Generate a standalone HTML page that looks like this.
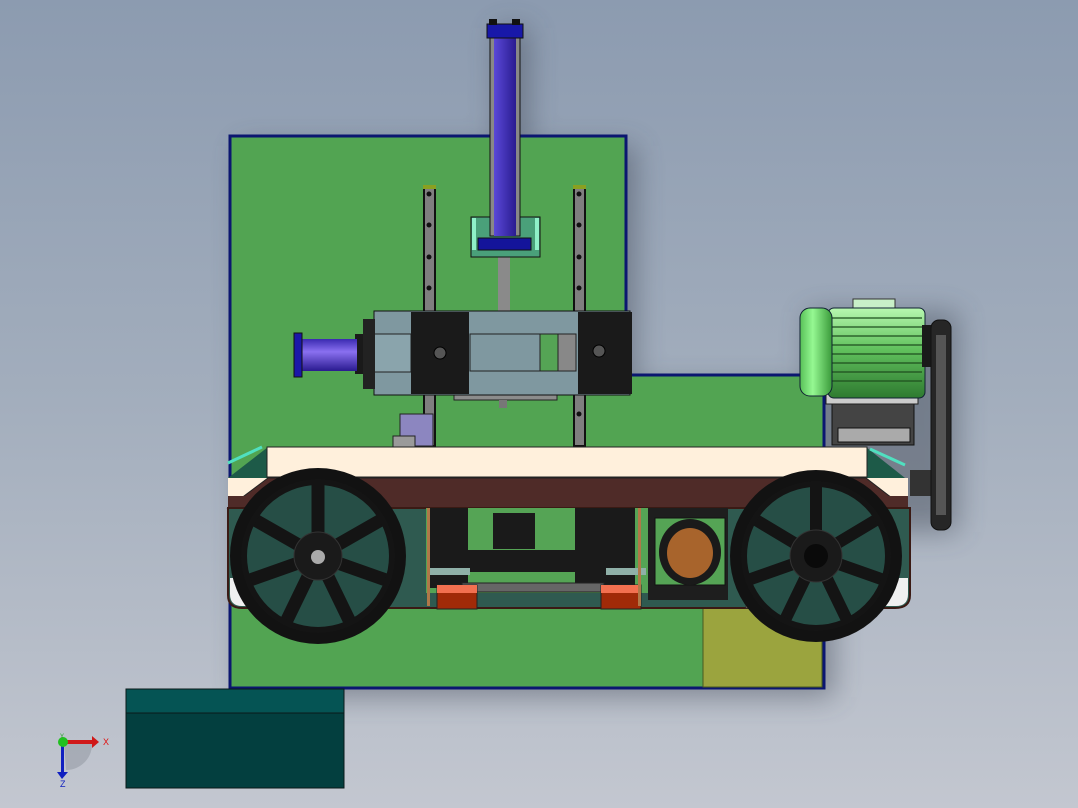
<!DOCTYPE html>
<html><head><meta charset="utf-8"><style>
html,body{margin:0;padding:0;width:1078px;height:808px;overflow:hidden}
svg{display:block}
</style></head><body>
<svg width="1078" height="808" viewBox="0 0 1078 808" xmlns="http://www.w3.org/2000/svg" font-family="Liberation Sans, sans-serif">
<defs>
<linearGradient id="bg" x1="0" y1="0" x2="0" y2="1">
<stop offset="0" stop-color="#8c9bb0"/><stop offset="0.5" stop-color="#a3aebd"/><stop offset="1" stop-color="#c3c7d0"/>
</linearGradient>
<linearGradient id="cylV" x1="0" x2="1"><stop offset="0" stop-color="#5a48d8"/><stop offset="1" stop-color="#2a1c90"/></linearGradient>
<linearGradient id="cylH" x1="0" y1="0" x2="0" y2="1"><stop offset="0" stop-color="#3a2ab0"/><stop offset="0.4" stop-color="#8a70f0"/><stop offset="1" stop-color="#2a1a90"/></linearGradient>
<linearGradient id="motor" x1="0" y1="0" x2="0" y2="1"><stop offset="0" stop-color="#b8f8b0"/><stop offset="0.45" stop-color="#62c25e"/><stop offset="1" stop-color="#2e7a30"/></linearGradient>
<linearGradient id="motorCap" x1="0" x2="1"><stop offset="0" stop-color="#58c058"/><stop offset="0.4" stop-color="#95f892"/><stop offset="1" stop-color="#3a9a3a"/></linearGradient>
<filter id="sh" x="-20%" y="-20%" width="140%" height="140%"><feGaussianBlur stdDeviation="14"/></filter>
</defs>
<rect width="1078" height="808" fill="url(#bg)"/>
<g filter="url(#sh)" opacity="0.45" fill="#3a4250">
<rect x="240" y="146" width="396" height="550"/><rect x="240" y="385" width="594" height="312"/>
<rect x="497" y="28" width="32" height="220"/><rect x="808" y="312" width="150" height="220"/>
</g>
<path d="M230 136 H626 V375 H824 V688 H230 Z" fill="#52a452" stroke="#0b1670" stroke-width="3"/>
<rect x="703" y="602" width="119" height="85" fill="#9ba43e" stroke="#4a5a20" stroke-width="1"/>
<rect x="126" y="689" width="218" height="99" fill="#033f3f" stroke="#0a1a1a"/>
<rect x="126" y="689" width="218" height="24" fill="#055454" stroke="#0a1a1a"/>
<g stroke="#111" stroke-width="2">
<rect x="424" y="188" width="11" height="258" fill="#7f7f7f"/>
<rect x="574" y="188" width="11" height="258" fill="#7f7f7f"/>
</g>
<rect x="423" y="185" width="13" height="4" fill="#8aa020"/><rect x="573" y="185" width="13" height="4" fill="#8aa020"/>
<g fill="#111"><circle cx="429" cy="194" r="2.5"/><circle cx="429" cy="225" r="2.5"/><circle cx="429" cy="257" r="2.5"/><circle cx="429" cy="288" r="2.5"/><circle cx="429" cy="420" r="2.5"/>
<circle cx="579" cy="194" r="2.5"/><circle cx="579" cy="225" r="2.5"/><circle cx="579" cy="257" r="2.5"/><circle cx="579" cy="288" r="2.5"/><circle cx="579" cy="414" r="2.5"/></g>
<rect x="498" y="246" width="12" height="66" fill="#8a8a8a"/>
<rect x="471" y="217" width="69" height="40" fill="#4aa07a" stroke="#111"/>
<rect x="472" y="218" width="4" height="32" fill="#8ff0c8"/><rect x="535" y="218" width="4" height="32" fill="#8ff0c8"/>
<rect x="490" y="36" width="30" height="200" fill="#888" stroke="#111"/>
<rect x="494" y="36" width="22" height="200" fill="url(#cylV)"/>
<rect x="478" y="238" width="53" height="12" fill="#14149a" stroke="#111"/>
<rect x="487" y="24" width="36" height="14" fill="#1818a8" stroke="#111"/>
<rect x="489" y="19" width="8" height="6" fill="#111"/><rect x="512" y="19" width="8" height="6" fill="#111"/>
<rect x="454" y="390" width="103" height="10" fill="#8c8c8c" stroke="#222"/>
<rect x="499" y="400" width="8" height="8" fill="#777"/>
<rect x="400" y="414" width="33" height="32" fill="#8c86c0" stroke="#222"/>
<rect x="393" y="436" width="22" height="12" fill="#9a9a9a" stroke="#222"/>
<rect x="374" y="311" width="256" height="84" fill="#7f98a0" stroke="#111"/>
<rect x="374" y="334" width="37" height="38" fill="#8aa4ac" stroke="#222"/>
<rect x="470" y="334" width="70" height="37" fill="#7f98a0" stroke="#222"/>
<rect x="540" y="334" width="18" height="37" fill="#55a455" stroke="#222"/>
<rect x="558" y="334" width="18" height="37" fill="#888" stroke="#222"/>
<rect x="411" y="312" width="58" height="82" fill="#1a1a1a"/>
<rect x="578" y="312" width="54" height="82" fill="#1a1a1a"/>
<circle cx="440" cy="353" r="6" fill="#555" stroke="#000"/><circle cx="599" cy="351" r="6" fill="#555" stroke="#000"/>
<rect x="355" y="334" width="20" height="40" fill="#1a1a1a"/><rect x="363" y="319" width="12" height="70" fill="#222"/>
<rect x="302" y="339" width="55" height="32" fill="url(#cylH)"/>
<rect x="294" y="333" width="8" height="44" fill="#1a18a8" stroke="#111"/>
<rect x="832" y="393" width="82" height="52" fill="#444" stroke="#111"/>
<rect x="838" y="428" width="72" height="14" fill="#aaa" stroke="#111"/>
<rect x="826" y="388" width="92" height="16" fill="#ccc" stroke="#222"/>
<rect x="853" y="299" width="42" height="12" fill="#c8f0c8" stroke="#333"/>
<rect x="828" y="308" width="97" height="90" rx="6" fill="url(#motor)" stroke="#123"/>
<g stroke="#1e4e1e" stroke-width="1.2">
<line x1="830" y1="318" x2="922" y2="318"/><line x1="830" y1="327" x2="922" y2="327"/><line x1="830" y1="336" x2="922" y2="336"/><line x1="830" y1="345" x2="922" y2="345"/><line x1="830" y1="354" x2="922" y2="354"/><line x1="830" y1="363" x2="922" y2="363"/><line x1="830" y1="372" x2="922" y2="372"/><line x1="830" y1="381" x2="922" y2="381"/></g>
<rect x="800" y="308" width="32" height="88" rx="10" fill="url(#motorCap)" stroke="#123"/>
<rect x="922" y="325" width="12" height="42" fill="#1a1a1a"/>
<rect x="910" y="470" width="25" height="26" fill="#333"/>
<rect x="931" y="320" width="20" height="210" rx="8" fill="#262626" stroke="#111"/>
<rect x="936" y="335" width="10" height="180" fill="#555"/>
<path d="M228 478 L268 447 V478 Z" fill="#1d5a48"/><path d="M228 463 L262 447" stroke="#50e0c0" stroke-width="3"/>
<path d="M905 478 L866 447 V478 Z" fill="#1d5a48"/><path d="M870 449 L905 465" stroke="#50e0c0" stroke-width="3"/>
<rect x="228" y="478" width="680" height="30" fill="#fff0dc"/>
<rect x="267" y="447" width="600" height="30" fill="#fff0dc" stroke="#222"/>
<path d="M228 508 L268 478 H866 L905 508 Z" fill="#4f2b28" stroke="#222"/>
<rect x="228" y="496" width="680" height="12" fill="#4f2b28"/>
<path d="M228 508 H910 V595 Q910 608 895 608 H242 Q228 608 228 595 Z" fill="#2f5a50" stroke="#3a1a14" stroke-width="2"/>
<path d="M230 578 H250 V606 H242 Q230 606 230 594 Z" fill="#f0f0f0"/>
<path d="M880 578 H908 V594 Q908 606 896 606 H880 Z" fill="#f0f0f0"/>
<rect x="254" y="585" width="132" height="23" fill="#fcbf98" stroke="#333"/>
<rect x="746" y="585" width="134" height="23" fill="#fcbf98" stroke="#333"/>
<rect x="426" y="508" width="222" height="85" fill="#55a455"/>
<rect x="430" y="508" width="38" height="80" fill="#1a1a1a"/>
<rect x="575" y="508" width="60" height="80" fill="#1a1a1a"/>
<rect x="493" y="513" width="42" height="36" fill="#1a1a1a"/>
<rect x="466" y="550" width="112" height="22" fill="#1a1a1a"/>
<rect x="462" y="583" width="142" height="9" fill="#666" stroke="#222"/>
<rect x="430" y="568" width="40" height="7" fill="#8fb0a8"/><rect x="606" y="568" width="40" height="7" fill="#8fb0a8"/>
<rect x="437" y="585" width="40" height="24" fill="#a02a08" stroke="#222"/><rect x="437" y="585" width="40" height="8" fill="#f27050"/>
<rect x="601" y="585" width="40" height="24" fill="#a02a08" stroke="#222"/><rect x="601" y="585" width="40" height="8" fill="#f27050"/>
<rect x="427" y="508" width="3" height="98" fill="#b07848"/><rect x="638" y="508" width="3" height="98" fill="#b07848"/>
<rect x="648" y="508" width="80" height="92" fill="#1e1e1e"/>
<rect x="655" y="518" width="70" height="67" fill="#55a455" stroke="#111"/>
<ellipse cx="690" cy="552" rx="31" ry="33" fill="#1a1a1a"/>
<ellipse cx="690" cy="553" rx="23" ry="25" fill="#a8642c"/>
<g>
<circle cx="318" cy="556" r="88" fill="#121212"/>
<circle cx="318" cy="556" r="74" fill="#264e46"/>
<g stroke="#141414" stroke-width="13">
<line x1="318" y1="556" x2="318" y2="484"/><line x1="318" y1="556" x2="381" y2="520"/><line x1="318" y1="556" x2="386" y2="580"/><line x1="318" y1="556" x2="350" y2="622"/><line x1="318" y1="556" x2="286" y2="622"/><line x1="318" y1="556" x2="250" y2="580"/><line x1="318" y1="556" x2="255" y2="520"/></g>
<circle cx="318" cy="556" r="74" fill="none" stroke="#141414" stroke-width="6"/>
<circle cx="318" cy="556" r="24" fill="#1a1a1a" stroke="#333"/>
<circle cx="318" cy="557" r="7" fill="#aaa"/>
</g>
<g>
<circle cx="816" cy="556" r="86" fill="#121212"/>
<circle cx="816" cy="556" r="72" fill="#264e46"/>
<g stroke="#141414" stroke-width="12">
<line x1="816" y1="556" x2="816" y2="484"/><line x1="816" y1="556" x2="876" y2="520"/><line x1="816" y1="556" x2="884" y2="580"/><line x1="816" y1="556" x2="848" y2="622"/><line x1="816" y1="556" x2="784" y2="622"/><line x1="816" y1="556" x2="748" y2="580"/><line x1="816" y1="556" x2="756" y2="520"/></g>
<circle cx="816" cy="556" r="72" fill="none" stroke="#141414" stroke-width="6"/>
<circle cx="816" cy="556" r="26" fill="#1a1a1a" stroke="#333"/>
<circle cx="816" cy="556" r="12" fill="#0a0a0a"/>
</g>
<path d="M64 742 H92 A26 26 0 0 1 66 770 Z" fill="#8a9098" opacity="0.45"/>
<rect x="61" y="742" width="3" height="32" fill="#1020c0"/>
<path d="M57 772 L68 772 L62 779 Z" fill="#1020c0"/>
<rect x="62" y="740" width="30" height="4" fill="#d01818"/>
<path d="M92 736 L99 742 L92 748 Z" fill="#d01818"/>
<circle cx="63" cy="742" r="5" fill="#20c020"/>
<text x="103" y="745" font-size="9" fill="#e01010">X</text>
<text x="60" y="787" font-size="9" fill="#1020c0">Z</text>
<text x="60" y="738" font-size="6" fill="#20a020">Y</text>
</svg>
</body></html>
